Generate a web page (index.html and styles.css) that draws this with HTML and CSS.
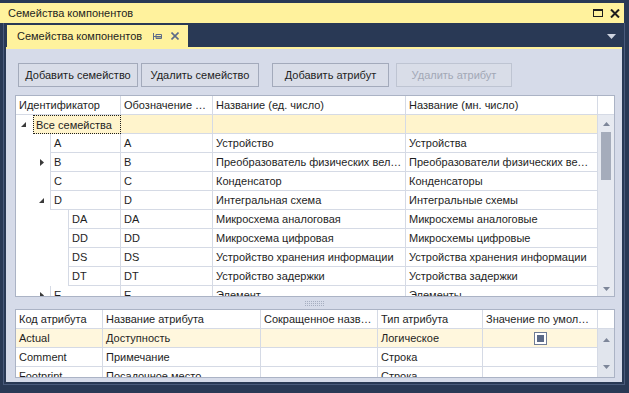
FILE: index.html
```html
<!DOCTYPE html>
<html>
<head>
    <meta charset="UTF-8">
    <title>Семейства компонентов</title>
    <link rel="stylesheet" href="styles.css">
</head>
<body>
<div class="title">
    <span class="title-text">Семейства компонентов</span>
    <span class="title-btns">
        <svg width="10" height="8" viewBox="0 0 10 8"><rect x="0.5" y="0.5" width="9" height="7" fill="none" stroke="#1e1e1e"/><rect x="0" y="0" width="10" height="2" fill="#1e1e1e"/></svg>
        <svg width="10" height="9" viewBox="0 0 10 9"><path d="M1 0.5 L9 8.5 M9 0.5 L1 8.5" stroke="#1e1e1e" stroke-width="2"/></svg>
    </span>
</div>
<div class="frame">
    <div class="tabs">
        <div class="tab">
            <span class="tab-text">Семейства компонентов</span>
            <svg class="pin" width="9" height="7" viewBox="0 0 9 7"><path d="M0.5 0 V7 M0 3.5 H3 M3 1.5 H8.5 V5.5 H3 Z" fill="none" stroke="#5c6b88"/><rect x="3" y="3" width="6" height="1.5" fill="#5c6b88"/></svg>
            <svg class="tab-close" width="8" height="8" viewBox="0 0 8 8"><path d="M0.5 0.5 L7.5 7.5 M7.5 0.5 L0.5 7.5" stroke="#5c6b88" stroke-width="1.6"/></svg>
        </div>
        <svg class="drop" width="9" height="5" viewBox="0 0 9 5"><path d="M0 0 H9 L4.5 5 Z" fill="#ced4e0"/></svg>
    </div>
    <div class="panel">
        <div class="buttons">
            <div class="btn w1">Добавить семейство</div>
            <div class="btn w2">Удалить семейство</div>
            <div class="btn w3">Добавить атрибут</div>
            <div class="btn w4 disabled">Удалить атрибут</div>
        </div>

        <div class="grid tree">
            <div class="head">
                <div class="hc t1">Идентификатор</div>
                <div class="hc t2">Обозначение семейства</div>
                <div class="hc t3">Название (ед. число)</div>
                <div class="hc t4">Название (мн. число)</div>
                <div class="hc sb"></div>
            </div>
            <div class="body">
                <div class="rows">
                    <div class="row sel">
                        <div class="ind i0"><svg width="5" height="5" viewBox="0 0 5 5"><path d="M5 0 V5 H0 Z" fill="#3a3a3a"/></svg></div>
                        <div class="cell t1 l0 focus">Все семейства</div>
                        <div class="cell t2"></div>
                        <div class="cell t3"></div>
                        <div class="cell t4"></div>
                    </div>
                    <div class="row">
                        <div class="ind i1"></div>
                        <div class="cell t1 l1">A</div>
                        <div class="cell t2">A</div>
                        <div class="cell t3">Устройство</div>
                        <div class="cell t4">Устройства</div>
                    </div>
                    <div class="row">
                        <div class="ind i1"><svg width="4" height="7" viewBox="0 0 4 7"><path d="M0 0 L4 3.5 L0 7 Z" fill="#3a3a3a"/></svg></div>
                        <div class="cell t1 l1">B</div>
                        <div class="cell t2">B</div>
                        <div class="cell t3">Преобразователь физических величин</div>
                        <div class="cell t4">Преобразователи физических величин</div>
                    </div>
                    <div class="row">
                        <div class="ind i1"></div>
                        <div class="cell t1 l1">C</div>
                        <div class="cell t2">C</div>
                        <div class="cell t3">Конденсатор</div>
                        <div class="cell t4">Конденсаторы</div>
                    </div>
                    <div class="row">
                        <div class="ind i1"><svg width="5" height="5" viewBox="0 0 5 5"><path d="M5 0 V5 H0 Z" fill="#3a3a3a"/></svg></div>
                        <div class="cell t1 l1">D</div>
                        <div class="cell t2">D</div>
                        <div class="cell t3">Интегральная схема</div>
                        <div class="cell t4">Интегральные схемы</div>
                    </div>
                    <div class="row">
                        <div class="ind i2"></div>
                        <div class="cell t1 l2">DA</div>
                        <div class="cell t2">DA</div>
                        <div class="cell t3">Микросхема аналоговая</div>
                        <div class="cell t4">Микросхемы аналоговые</div>
                    </div>
                    <div class="row">
                        <div class="ind i2"></div>
                        <div class="cell t1 l2">DD</div>
                        <div class="cell t2">DD</div>
                        <div class="cell t3">Микросхема цифровая</div>
                        <div class="cell t4">Микросхемы цифровые</div>
                    </div>
                    <div class="row">
                        <div class="ind i2"></div>
                        <div class="cell t1 l2">DS</div>
                        <div class="cell t2">DS</div>
                        <div class="cell t3">Устройство хранения информации</div>
                        <div class="cell t4">Устройства хранения информации</div>
                    </div>
                    <div class="row">
                        <div class="ind i2"></div>
                        <div class="cell t1 l2">DT</div>
                        <div class="cell t2">DT</div>
                        <div class="cell t3">Устройство задержки</div>
                        <div class="cell t4">Устройства задержки</div>
                    </div>
                    <div class="row">
                        <div class="ind i1"><svg width="4" height="7" viewBox="0 0 4 7"><path d="M0 0 L4 3.5 L0 7 Z" fill="#3a3a3a"/></svg></div>
                        <div class="cell t1 l1">E</div>
                        <div class="cell t2">E</div>
                        <div class="cell t3">Элемент</div>
                        <div class="cell t4">Элементы</div>
                    </div>
                </div>
                <div class="vscroll">
                    <svg class="arr" width="7" height="4" viewBox="0 0 7 4"><path d="M3.5 0 L7 4 H0 Z" fill="#7d8699"/></svg>
                    <div class="thumb"></div>
                    <div class="fill"></div>
                    <svg class="arr" width="7" height="4" viewBox="0 0 7 4"><path d="M0 0 H7 L3.5 4 Z" fill="#7d8699"/></svg>
                </div>
            </div>
        </div>

        <div class="splitter"><div class="grip"></div></div>

        <div class="grid attrs">
            <div class="head">
                <div class="hc a1">Код атрибута</div>
                <div class="hc a2">Название атрибута</div>
                <div class="hc a3">Сокращенное название</div>
                <div class="hc a4">Тип атрибута</div>
                <div class="hc a5">Значение по умолчанию</div>
                <div class="hc sb"></div>
            </div>
            <div class="body">
                <div class="rows">
                    <div class="row cur">
                        <div class="cell a1">Actual</div>
                        <div class="cell a2">Доступность</div>
                        <div class="cell a3"></div>
                        <div class="cell a4">Логическое</div>
                        <div class="cell a5 center"><span class="check"></span></div>
                    </div>
                    <div class="row">
                        <div class="cell a1">Comment</div>
                        <div class="cell a2">Примечание</div>
                        <div class="cell a3"></div>
                        <div class="cell a4">Строка</div>
                        <div class="cell a5"></div>
                    </div>
                    <div class="row">
                        <div class="cell a1">Footprint</div>
                        <div class="cell a2">Посадочное место</div>
                        <div class="cell a3"></div>
                        <div class="cell a4">Строка</div>
                        <div class="cell a5"></div>
                    </div>
                </div>
                <div class="vscroll small">
                    <svg class="arr" width="7" height="4" viewBox="0 0 7 4"><path d="M3.5 0 L7 4 H0 Z" fill="#7d8699"/></svg>
                    <div class="fill"></div>
                    <svg class="arr" width="7" height="4" viewBox="0 0 7 4"><path d="M0 0 H7 L3.5 4 Z" fill="#7d8699"/></svg>
                </div>
            </div>
        </div>
    </div>
</div>
</body>
</html>
```

FILE: styles.css
```css
* {
    margin: 0;
    padding: 0;
    box-sizing: border-box;
}

body {
    width: 629px;
    height: 393px;
    overflow: hidden;
    padding-top: 3px;
    background-color: #293955;
    font-family: "Liberation Sans", Arial, sans-serif;
    font-size: 11px;
    color: #1e1e1e;
}

/* заголовок окна */
.title {
    display: flex;
    align-items: center;
    justify-content: space-between;
    width: 624px;
    height: 20px;
    padding: 0 4px 0 8px;
    background-color: #fff29d;
}
.title-btns {
    display: flex;
    align-items: center;
    gap: 7px;
}

.frame {
    width: 622px;
    margin-left: 3px;
    padding: 0 2px 2px 2px;
    border: 1px solid #4a5b7c;
    border-top: none;
    background-color: #293955;
}

/* вкладки */
.tabs {
    display: flex;
    align-items: flex-end;
    justify-content: space-between;
    height: 24px;
    padding-left: 1px;
    padding-right: 6px;
}
.tab {
    display: flex;
    align-items: center;
    width: 181px;
    height: 22px;
    padding-left: 10px;
    background-color: #fff29d;
    white-space: nowrap;
}
.tab-text {
    width: 136px;
}
.tab .tab-close {
    margin-left: 9px;
}
.drop {
    align-self: center;
    margin-top: 2px;
}

.panel {
    border-top: 2px solid #fff29d;
    height: 335px;
    padding: 14px 6px 4px 9px;
    background-color: #d6dbe9;
}

.buttons {
    display: flex;
    height: 24px;
    margin-left: 3px;
    margin-bottom: 8px;
}
.btn {
    display: flex;
    align-items: center;
    justify-content: center;
    height: 24px;
    border: 1px solid #a3aabb;
    background-color: #d9dde8;
    white-space: nowrap;
}
.btn.w1 { width: 120px; }
.btn.w2 { width: 118px; margin-left: 3px; }
.btn.w3 { width: 117px; margin-left: 13px; }
.btn.w4 { width: 116px; margin-left: 7px; }
.btn.disabled {
    border-color: #bec4d2;
    color: #a2a8b6;
}

/* таблицы */
.grid {
    display: flex;
    flex-direction: column;
    width: 600px;
    border: 1px solid #abb3c5;
    background-color: #fff;
    overflow: hidden;
}
.grid.tree { height: 202px; }
.grid.attrs { height: 69px; }

.head, .row {
    display: flex;
    flex-shrink: 0;
    height: 19px;
}
.hc, .cell {
    flex-shrink: 0;
    height: 19px;
    line-height: 18px;
    padding: 0 3px;
    border-right: 1px solid #d5dae5;
    border-bottom: 1px solid #d5dae5;
    white-space: nowrap;
    overflow: hidden;
    text-overflow: ellipsis;
}
.hc.sb {
    border-right: none;
}
.body {
    display: flex;
    flex: 1;
    min-height: 0;
}
.rows {
    width: 582px;
    overflow: hidden;
}

.t1 { width: 105px; }
.t2 { width: 92px; }
.t3 { width: 193px; }
.t4 { width: 192px; }
.sb { width: 16px; }

.a1 { width: 87px; }
.a2 { width: 158px; }
.a3 { width: 117px; }
.a4 { width: 105px; }
.a5 { width: 115px; }

.ind {
    display: flex;
    align-items: center;
    justify-content: flex-end;
    flex-shrink: 0;
    height: 19px;
}
.ind.i0 { width: 17px; padding-right: 7px; }
.ind.i1 { width: 34px; padding-right: 6px; }
.ind.i2 { width: 52px; }

.cell.l0 { width: 88px; }
.cell.l1 { width: 71px; border-left: 1px solid #d5dae5; }
.cell.l2 { width: 53px; border-left: 1px solid #d5dae5; }
.cell.focus {
    border: 1px dotted #1e1e1e;
    padding-left: 2px;
}

.row.sel .cell { background-color: #fff4cc; }
.row.cur .cell { background-color: #fff7dd; }

.center {
    display: flex;
    align-items: center;
    justify-content: center;
}
.check {
    display: block;
    width: 13px;
    height: 13px;
    border: 1px solid #6f7c95;
    padding: 2px;
    background-clip: content-box;
    background-color: #5b6a87;
    box-shadow: inset 0 0 0 2px #fff;
}

.vscroll {
    display: flex;
    flex-direction: column;
    align-items: center;
    width: 16px;
    background-color: #e7eaf1;
    padding: 7px 0 5px;
}
.vscroll.small {
    padding: 9px 0 8px;
    background-color: #e1e5ed;
}
.vscroll .thumb {
    width: 10px;
    height: 48px;
    margin-top: 6px;
    background-color: #a5acbb;
}
.vscroll .fill {
    flex: 1;
}

.splitter {
    display: flex;
    align-items: center;
    justify-content: center;
    height: 12px;
    width: 600px;
}
.grip {
    width: 20px;
    height: 5px;
    background-image: radial-gradient(circle at 0.5px 0.5px, #a6aec0 0.5px, transparent 0.6px);
    background-size: 2px 2px;
}
```
